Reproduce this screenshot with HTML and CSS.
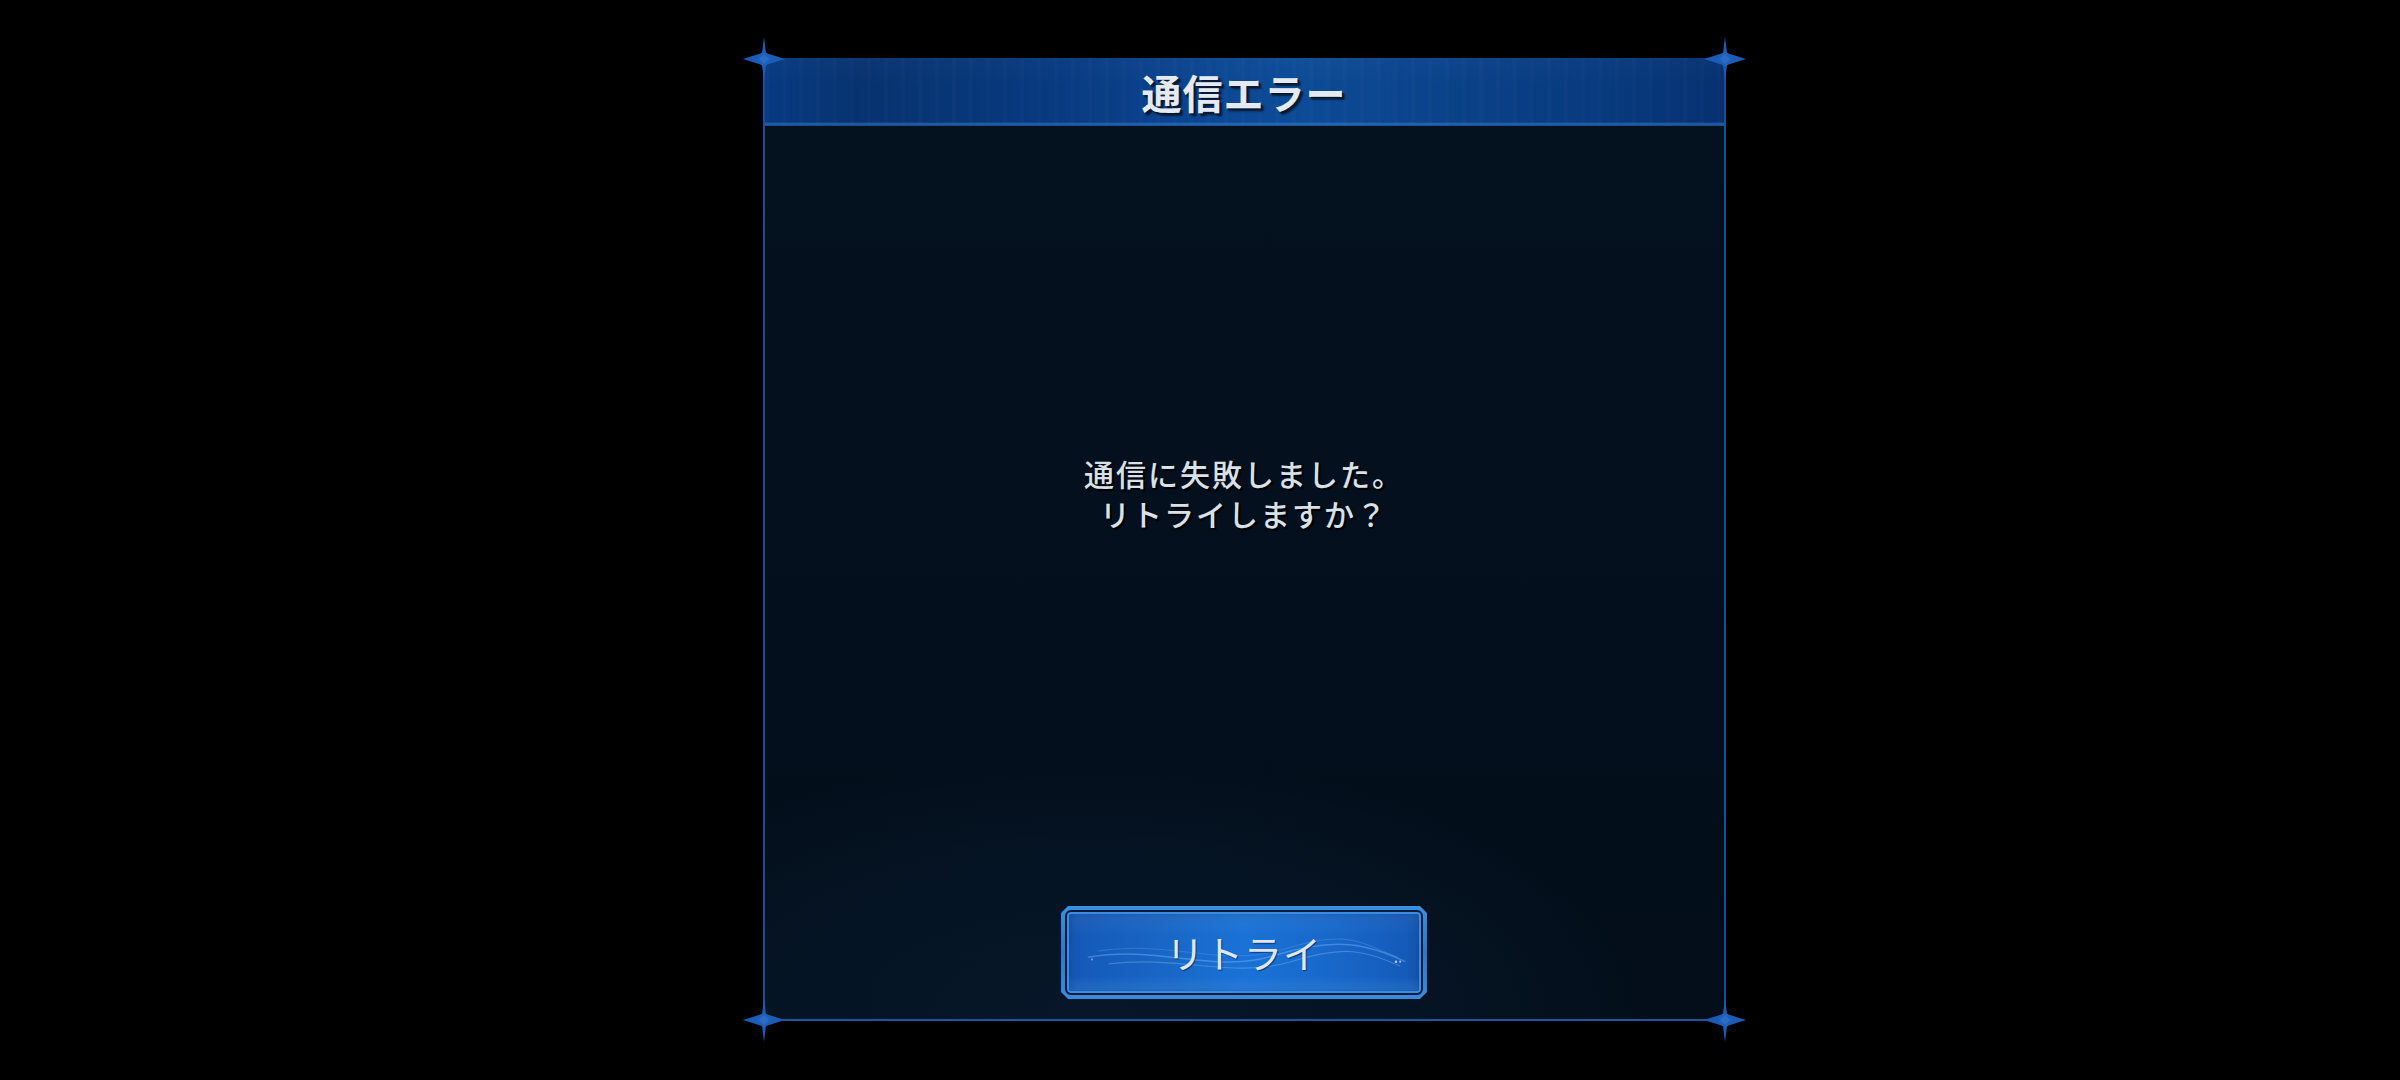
FILE: index.html
```html
<!DOCTYPE html>
<html lang="ja">
<head>
<meta charset="utf-8">
<title>通信エラー</title>
<link rel="stylesheet" href="styles.css">
</head>
<body>
<div class="stage">
  <div class="dialog">
    <div class="dialog-header">
      <h1 class="dialog-title">通信エラー</h1>
    </div>
    <div class="dialog-body">
      <p class="message">通信に失敗しました。<br>リトライしますか？</p>
      <button class="retry-btn" type="button">
        <span class="retry-inner">
          <svg class="wave" viewBox="0 0 340 75" preserveAspectRatio="none" aria-hidden="true">
            <path d="M20 42 C 90 30, 140 58, 200 40 S 290 30, 325 46" fill="none" stroke="#7fc0ff" stroke-opacity="0.4" stroke-width="1.4"/>
            <path d="M40 48 C 110 40, 160 62, 215 46 S 285 36, 320 50" fill="none" stroke="#9fd2ff" stroke-opacity="0.3" stroke-width="1"/>
            <path d="M30 36 C 100 26, 150 52, 210 34 S 280 28, 318 42" fill="none" stroke="#6cb4ff" stroke-opacity="0.28" stroke-width="1"/>
            <circle cx="316" cy="46" r="1.2" fill="#cfe8ff" fill-opacity="0.8"/>
            <circle cx="320" cy="46" r="1" fill="#cfe8ff" fill-opacity="0.7"/>
            <circle cx="24" cy="44" r="1" fill="#cfe8ff" fill-opacity="0.5"/>
          </svg>
          <span class="retry-label">リトライ</span>
        </span>
      </button>
    </div>
    <svg class="star star-tl" viewBox="-22 -22 44 44" aria-hidden="true"><path class="star-arms" d="M0,-22 L2,-6 L21,0 L2,6 L0,22 L-2,6 L-21,0 L-2,-6 Z"/><path class="star-core" d="M0,-8.5 L8.5,0 L0,8.5 L-8.5,0 Z"/><path class="star-hi" d="M0,-5 L5,0 L0,5 L-5,0 Z"/></svg>
    <svg class="star star-tr" viewBox="-22 -22 44 44" aria-hidden="true"><path class="star-arms" d="M0,-22 L2,-6 L21,0 L2,6 L0,22 L-2,6 L-21,0 L-2,-6 Z"/><path class="star-core" d="M0,-8.5 L8.5,0 L0,8.5 L-8.5,0 Z"/><path class="star-hi" d="M0,-5 L5,0 L0,5 L-5,0 Z"/></svg>
    <svg class="star star-bl" viewBox="-22 -22 44 44" aria-hidden="true"><path class="star-arms" d="M0,-22 L2,-6 L21,0 L2,6 L0,22 L-2,6 L-21,0 L-2,-6 Z"/><path class="star-core" d="M0,-8.5 L8.5,0 L0,8.5 L-8.5,0 Z"/><path class="star-hi" d="M0,-5 L5,0 L0,5 L-5,0 Z"/></svg>
    <svg class="star star-br" viewBox="-22 -22 44 44" aria-hidden="true"><path class="star-arms" d="M0,-22 L2,-6 L21,0 L2,6 L0,22 L-2,6 L-21,0 L-2,-6 Z"/><path class="star-core" d="M0,-8.5 L8.5,0 L0,8.5 L-8.5,0 Z"/><path class="star-hi" d="M0,-5 L5,0 L0,5 L-5,0 Z"/></svg>
  </div>
</div>
</body>
</html>
```
FILE: styles.css
```css
html, body {
  margin: 0;
  padding: 0;
  background: #000;
  width: 100%;
  height: 100%;
  overflow: hidden;
  font-family: "Noto Sans CJK JP", "Noto Sans", sans-serif;
}

.stage {
  display: flex;
  justify-content: center;
  padding-top: 58px;
  padding-left: 88px;
}

.dialog {
  position: relative;
  width: 963px;
  height: 963px;
  display: flex;
  flex-direction: column;
  box-sizing: border-box;
}

.dialog-header {
  height: 68px;
  flex: 0 0 68px;
  display: flex;
  align-items: center;
  justify-content: center;
  background:
    linear-gradient(180deg, rgba(255,255,255,0.02) 0%, rgba(255,255,255,0) 40%, rgba(0,0,0,0) 94%, rgba(70,140,220,0.5) 97%, rgba(30,80,150,0.6) 100%),
    repeating-linear-gradient(90deg, rgba(255,255,255,0.012) 0 4px, rgba(0,0,0,0.012) 4px 9px, rgba(255,255,255,0) 9px 17px),
    linear-gradient(90deg, #073a82 0%, #07336f 10%, #083a80 30%, #0c4894 48%, #0d4b97 56%, #0a4289 72%, #083a7e 88%, #063171 100%);
  border-left: 2px solid #1a4e96;
  border-right: 2px solid #1a4e96;
  box-sizing: border-box;
}

.dialog-title {
  margin: 0;
  font-size: 40px;
  font-weight: 700;
  line-height: 68px;
  color: #e3eaf3;
  letter-spacing: 1px;
  text-shadow: 2px 2px 0 #0a1830, 3px 3px 2px rgba(0,0,0,0.55);
}

.dialog-body {
  flex: 1 1 auto;
  display: flex;
  flex-direction: column;
  align-items: center;
  border-left: 2px solid #1a4e96;
  border-right: 2px solid #1a4e96;
  border-bottom: 2px solid #1d55a2;
  box-sizing: border-box;
  background:
    radial-gradient(ellipse 560px 260px at 34% 100%, rgba(10,32,56,0.5) 0%, rgba(10,32,56,0.3) 60%, rgba(10,32,56,0) 100%),
    linear-gradient(180deg, #04111f 0%, #030f1c 60%, #030e1a 100%);
}

.message {
  margin: 327px 0 0 0;
  font-size: 30px;
  line-height: 40px;
  letter-spacing: 2px;
  text-align: center;
  color: #d7e1ea;
  font-weight: 500;
  text-shadow: 2px 2px 0 #000, 1px 1px 2px rgba(0,0,0,0.9);
}

.retry-btn {
  margin-top: auto;
  margin-bottom: 20px;
  width: 366px;
  height: 93px;
  padding: 4px;
  border: none;
  font: inherit;
  cursor: pointer;
  background: linear-gradient(180deg, #3b8ee0 0%, #2b78cc 50%, #3a8ade 100%);
  clip-path: polygon(7px 0, calc(100% - 7px) 0, 100% 7px, 100% calc(100% - 7px), calc(100% - 7px) 100%, 7px 100%, 0 calc(100% - 7px), 0 7px);
  box-sizing: border-box;
  display: flex;
}

.retry-inner {
  position: relative;
  flex: 1;
  display: flex;
  align-items: center;
  justify-content: center;
  border-radius: 6px;
  border: 2px solid #061d3c;
  box-shadow: inset 0 0 0 2px #3a8ce2, inset 0 0 12px rgba(0,20,60,0.35);
  background:
    linear-gradient(180deg, rgba(255,255,255,0.06) 0%, rgba(255,255,255,0) 30%, rgba(0,0,0,0) 80%, rgba(90,170,255,0.25) 96%, rgba(0,0,0,0) 100%),
    linear-gradient(90deg, #1558b6 0%, #1865c4 25%, #1a72d6 50%, #1869cc 72%, #1560c0 88%, #1457b3 100%);
  overflow: hidden;
}

.wave {
  position: absolute;
  left: 0;
  top: 0;
  width: 100%;
  height: 100%;
}

.retry-label {
  position: relative;
  font-size: 38px;
  font-weight: 400;
  color: #dfe6ee;
  letter-spacing: 1px;
  line-height: 1;
  margin-top: -2px;
  text-shadow: 1px 1px 1px rgba(0,20,50,0.6);
}

.star {
  position: absolute;
  width: 44px;
  height: 44px;
  pointer-events: none;
}

.star-arms { fill: #1c5cb6; }
.star-core { fill: #1d5fba; }
.star-hi { fill: #2a6cc6; }

.star-tl { left: -21px; top: -21px; }
.star-tr { right: -21px; top: -21px; }
.star-bl { left: -21px; bottom: -21px; }
.star-br { right: -21px; bottom: -21px; }
```
